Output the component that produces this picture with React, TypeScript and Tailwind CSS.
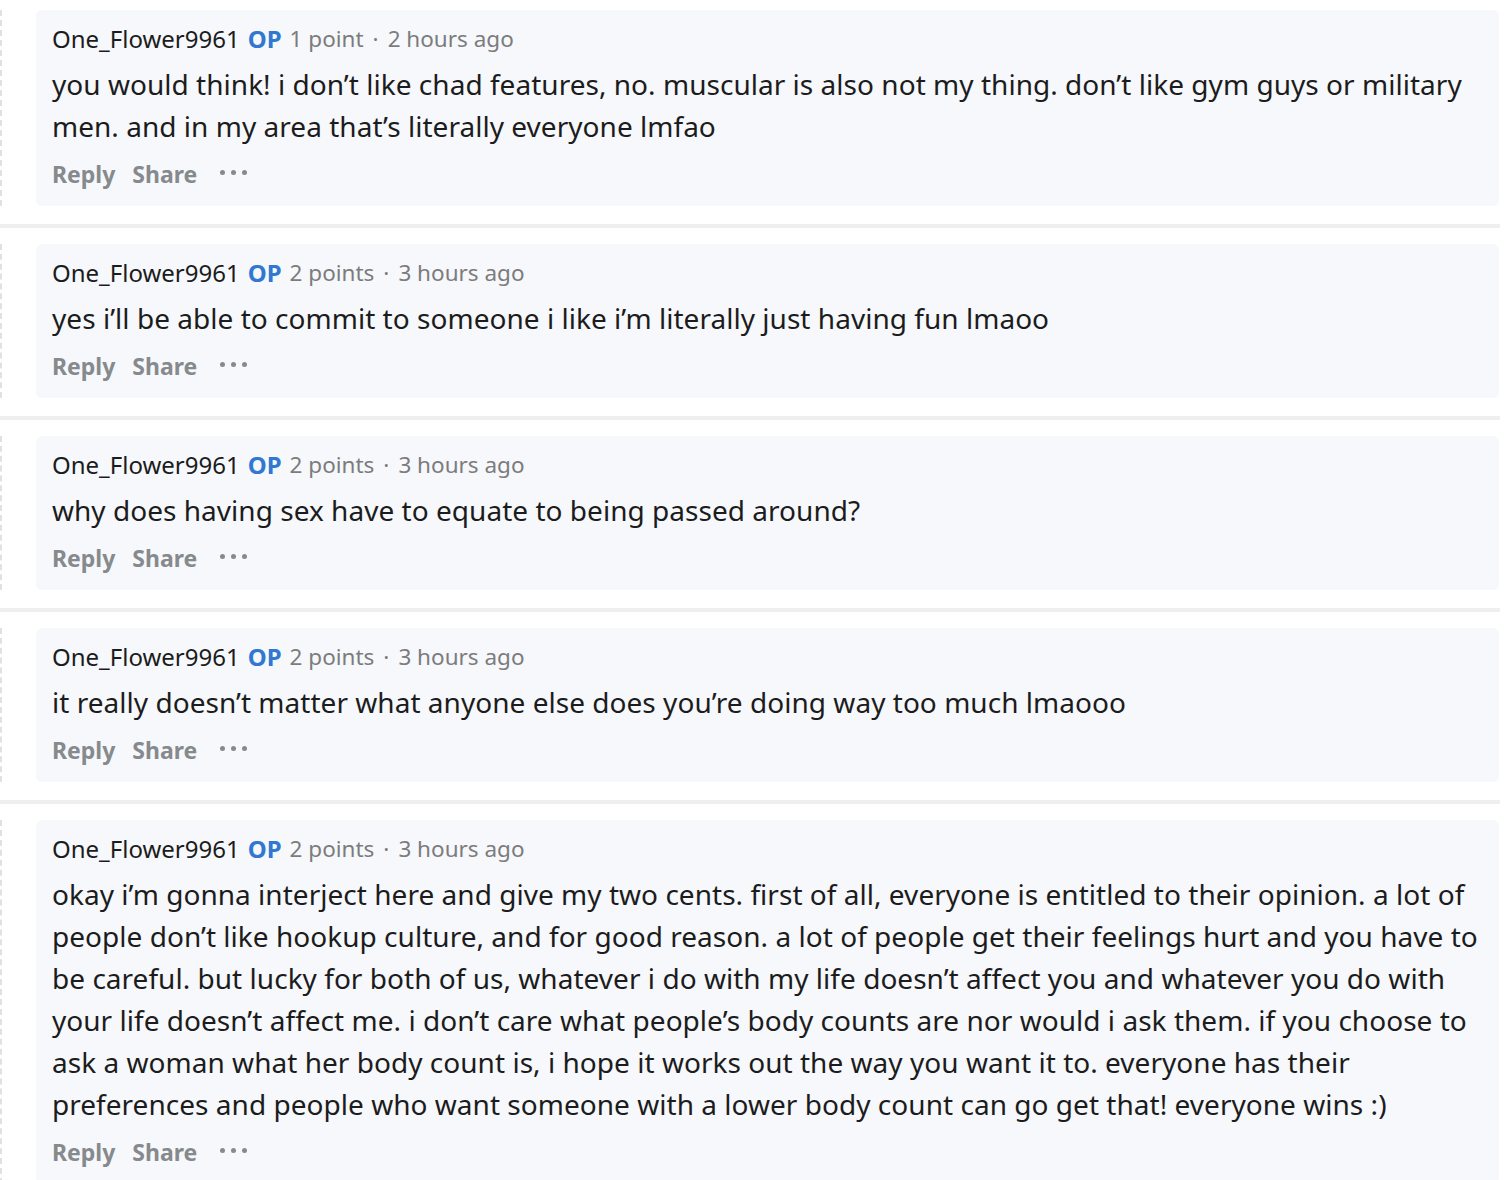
import React from "react";

type C = { points: string; time: string; body: string };

const comments: C[] = [
  {
    points: "1 point",
    time: "2 hours ago",
    body: "you would think! i don’t like chad features, no. muscular is also not my thing. don’t like gym guys or military men. and in my area that’s literally everyone lmfao",
  },
  {
    points: "2 points",
    time: "3 hours ago",
    body: "yes i’ll be able to commit to someone i like i’m literally just having fun lmaoo",
  },
  {
    points: "2 points",
    time: "3 hours ago",
    body: "why does having sex have to equate to being passed around?",
  },
  {
    points: "2 points",
    time: "3 hours ago",
    body: "it really doesn’t matter what anyone else does you’re doing way too much lmaooo",
  },
  {
    points: "2 points",
    time: "3 hours ago",
    body: "okay i’m gonna interject here and give my two cents. first of all, everyone is entitled to their opinion. a lot of people don’t like hookup culture, and for good reason. a lot of people get their feelings hurt and you have to be careful. but lucky for both of us, whatever i do with my life doesn’t affect you and whatever you do with your life doesn’t affect me. i don’t care what people’s body counts are nor would i ask them. if you choose to ask a woman what her body count is, i hope it works out the way you want it to. everyone has their preferences and people who want someone with a lower body count can go get that! everyone wins :)",
  },
];

function Comment({ c, first, last }: { c: C; first: boolean; last: boolean }) {
  return (
    <div>
      <div className={first ? "pt-[10px] pb-[18px]" : "pt-4 pb-[18px]"}>
        <div className="flex border-l-2 border-dashed border-[#dfe1e3]">
          <div className="ml-[34px] w-[1463px] rounded-md bg-[#f6f8fc] pl-4 pr-4 pt-[11px] pb-[14px]">
            <div className="flex items-center h-[36px] text-[24px] leading-[36px] whitespace-nowrap">
              <span className="text-[#1c1c1c]">One_Flower9961</span>
              <span className="ml-[8px] font-bold text-[#3178d0]">OP</span>
              <span className="ml-[8px] text-[22.5px] text-[#7c7c7c]">{c.points}</span>
              <span className="mx-[9px] text-[22.5px] text-[#7c7c7c]">·</span>
              <span className="text-[22.5px] text-[#7c7c7c]">{c.time}</span>
            </div>
            <div className="mt-[6px] text-[28px] leading-[42px] tracking-[0.03px] text-[#1c1c1c]">{c.body}</div>
            <div className="mt-[9px] flex items-center h-[36px] text-[23px] font-bold text-[#878a8c]">
              <span>Reply</span>
              <span className="ml-[17px]">Share</span>
              <span className="ml-[23px] flex items-center gap-[6px] -mt-[4px]">
                <span className="block w-[5px] h-[5px] rounded-full bg-[#878a8c]" />
                <span className="block w-[5px] h-[5px] rounded-full bg-[#878a8c]" />
                <span className="block w-[5px] h-[5px] rounded-full bg-[#878a8c]" />
              </span>
            </div>
          </div>
        </div>
      </div>
      {!last && <div className="h-1 w-[1500px] bg-[#edeff1]" />}
    </div>
  );
}

export default function App() {
  return (
    <div
      className="w-[1506px] bg-white overflow-hidden"
      style={{ fontFamily: '"Noto Sans", "Open Sans", sans-serif' }}
    >
      {comments.map((c, i) => (
        <Comment key={i} c={c} first={i === 0} last={i === comments.length - 1} />
      ))}
    </div>
  );
}
